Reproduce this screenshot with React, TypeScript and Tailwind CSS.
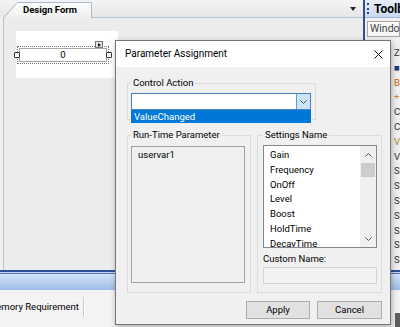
const settings = ["Gain", "Frequency", "OnOff", "Level", "Boost", "HoldTime", "DecayTime"];

const toolItems = [
  { t: "Zoom", c: "text-[#333]" },
  { t: "■ Panel", c: "text-[#1f3a7a]" },
  { t: "Button", c: "text-[#c76a1a]" },
  { t: "+ Add", c: "text-[#d08a2a]" },
  { t: "Combo", c: "text-[#333]" },
  { t: "Check", c: "text-[#333]" },
  { t: "Value", c: "text-[#a08a20]" },
  { t: "Volume", c: "text-[#333]" },
  { t: "Slider", c: "text-[#333]" },
  { t: "Switch", c: "text-[#333]" },
  { t: "Spin", c: "text-[#333]" },
  { t: "Static", c: "text-[#333]" },
  { t: "Shape", c: "text-[#333]" },
  { t: "Scope", c: "text-[#333]" },
  { t: "Script", c: "text-[#333]" },
];

function Chevron({ up }: { up?: boolean }) {
  return (
    <svg width="7" height="4" viewBox="0 0 7 4" className="block">
      <path
        d={up ? "M0.5 3.5L3.5 0.5L6.5 3.5" : "M0.5 0.5L3.5 3.5L6.5 0.5"}
        fill="none"
        stroke="#505050"
        strokeWidth="1"
      />
    </svg>
  );
}

export default function App() {
  return (
    <div className="relative h-[327px] w-[400px] overflow-hidden bg-[#f0f0f0] font-[Roboto,sans-serif] text-[9.5px] leading-[12px] text-black">
      <div className="flex h-full flex-col">
        <div className="flex h-[270px]">
          {/* designer */}
          <div className="flex w-[363px] flex-col">
            <div className="flex h-[17px] items-end bg-gradient-to-b from-[#f4f4f4] to-[#e7e7e7]">
              <div className="relative z-10 -mb-px ml-[3px] flex h-[17px] w-[89px] items-center pl-[20px]">
                <svg className="absolute inset-0" width="89" height="17" viewBox="0 0 89 17">
                  <defs>
                    <linearGradient id="tabg" x1="0" y1="0" x2="0" y2="1">
                      <stop offset="0" stopColor="#ffffff" />
                      <stop offset="1" stopColor="#eeeeee" />
                    </linearGradient>
                  </defs>
                  <path
                    d="M0.5 17 L13.5 2.5 Q14.5 1.5 16 1.5 L88.5 1.5 L88.5 17"
                    fill="url(#tabg)"
                    stroke="#a8b8cf"
                  />
                </svg>
                <span className="relative font-bold">Design Form</span>
              </div>
              <div className="flex-1" />
              <svg width="6" height="4" viewBox="0 0 6 4" className="mb-[6px] mr-[7px]">
                <path d="M0 0H6L3 4Z" fill="#222" />
              </svg>
            </div>
            <div className="ml-[3px] flex-1 border-l border-t border-[#b3c3da] bg-[#ececec] pl-[12px] pt-[13px]">
              <div className="h-[47px] w-[102px] bg-white pl-[1px] pt-[15px]">
                <div className="relative h-[18px] w-[92px] border border-dotted border-[#777] p-[1px]">
                  <div className="flex h-full items-center justify-center border border-[#a8a8a8] bg-white">0</div>
                  <div className="absolute left-[-4px] top-[5px] h-[6px] w-[6px] rounded-[1px] border border-[#333] bg-white" />
                  <div className="absolute right-[-4px] top-[5px] h-[6px] w-[6px] rounded-[1px] border border-[#333] bg-white" />
                  <div className="absolute left-[77px] top-[-6px] flex h-[7px] w-[8px] items-center justify-center border border-[#777] bg-[#e4e4e4]">
                    <svg width="3" height="4" viewBox="0 0 3 4">
                      <path d="M0 0L3 2L0 4Z" fill="#111" />
                    </svg>
                  </div>
                </div>
              </div>
            </div>
          </div>
          <div className="w-[2px] bg-[#2f4f96]" />
          {/* toolbox */}
          <div className="flex flex-1 flex-col overflow-hidden whitespace-nowrap">
            <div className="flex h-[18px] items-center border-b border-[#9fb4d6] bg-gradient-to-b from-[#e6eef9] to-[#c7d9f1] pl-[2px]">
              <div className="h-[11px] border-l-2 border-dotted border-[#3a4a6a]" />
              <span className="ml-[5px] text-[12px] font-bold">Toolbox</span>
            </div>
            <div className="ml-[2px] mt-[3px] flex h-[16px] items-center border border-[#a7a7a7] bg-[#f7f7f7] pl-[2px] text-[10.5px] text-[#444]">
              Window
            </div>
            <div className="pl-[29px] pt-[9px] leading-[14.8px]">
              {toolItems.map((it, i) => (
                <div key={i} className={it.c}>
                  {it.t}
                </div>
              ))}
            </div>
          </div>
        </div>
        {/* bottom */}
        <div className="h-[2px] bg-[#2c4d98]" />
        <div className="h-[1px] bg-[#c5d5ef]" />
        <div className="h-[1px] bg-[#4f72b5]" />
        <div className="h-[16px] bg-gradient-to-b from-[#d4e3f7] to-[#9cbce8]" />
        <div className="relative flex-1 bg-[#f3f3f3]">
          <div className="mt-[7px] flex h-[20px] items-center">
            <div className="w-[83px] overflow-hidden whitespace-nowrap">
              <span className="-ml-[12px] inline-block">Memory Requirement</span>
            </div>
            <div className="h-full w-[2px] border-l border-r border-l-[#c8c8c8] border-r-white" />
          </div>
          <div className="absolute bottom-0 right-0 h-[14px] w-[5px] bg-[#5f5f5f]" />
        </div>
      </div>

      {/* dialog */}
      <div className="absolute left-[115px] top-[40px] flex h-[285px] w-[276px] flex-col border border-[#767676] bg-[#f0f0f0] shadow-[1px_2px_6px_rgba(0,0,0,0.3)]">
        <div className="flex h-[26px] items-center bg-white pl-[9px] text-[10px]">
          <span>Parameter Assignment</span>
          <svg width="9" height="9" viewBox="0 0 9 9" className="ml-auto mr-[7px]">
            <path d="M0.5 0.5L8.5 8.5M8.5 0.5L0.5 8.5" stroke="#111" strokeWidth="1" />
          </svg>
        </div>
        <div className="flex flex-col pl-[11px] pr-[8px]">
          <fieldset className="mt-[10px] w-[189px] border border-[#dcdcdc] pb-[9px] pl-[3px] pr-[4px] pt-[4px]">
            <legend className="px-[2px] leading-[12px]">Control Action</legend>
            <div className="relative flex h-[17px] border border-[#4d82bd] bg-white">
              <div className="flex-1" />
              <div className="flex w-[14px] items-center justify-center border-l border-[#569de5] bg-[#cce4f7]">
                <Chevron />
              </div>
              <div className="absolute left-[-1px] right-[-1px] top-[16px] z-10 flex h-[13px] items-center bg-[#0078d7] pl-[3px] text-white">
                ValueChanged
              </div>
            </div>
          </fieldset>
          <div className="mt-[9px] flex gap-[6px]">
            <fieldset className="w-[124px] border border-[#dcdcdc] pb-[9px] pl-[3px] pr-[5px] pt-[5px]">
              <legend className="px-[2px] leading-[12px]">Run-Time Parameter</legend>
              <div className="h-[137px] border border-[#a0a0a0] bg-[#f0f0f0] pl-[6px] pt-[1px] leading-[14.8px]">
                uservar1
              </div>
            </fieldset>
            <fieldset className="w-[125px] border border-[#dcdcdc] pb-[8px] pl-[5px] pr-[4px] pt-[4px]">
              <legend className="px-[2px] leading-[12px]">Settings Name</legend>
              <div className="flex h-[103px] border border-[#828790] bg-white">
                <div className="flex-1 overflow-hidden pl-[6px] pt-[2px] leading-[14.8px]">
                  {settings.map((s) => (
                    <div key={s}>{s}</div>
                  ))}
                </div>
                <div className="flex w-[16px] flex-col items-center bg-[#f0f0f0]">
                  <div className="flex h-[17px] items-center justify-center">
                    <Chevron up />
                  </div>
                  <div className="h-[14px] w-[14px] bg-[#cdcdcd]" />
                  <div className="flex-1" />
                  <div className="flex h-[17px] items-center justify-center">
                    <Chevron />
                  </div>
                </div>
              </div>
              <div className="mt-[5px] leading-[12px]">Custom Name:</div>
              <div className="mt-[2px] h-[17px] border border-[#d4d4d4] bg-[#f2f2f2]" />
            </fieldset>
          </div>
          <div className="mt-[8px] flex justify-end gap-[7px]">
            <button className="h-[18px] w-[64px] border border-[#adadad] bg-[#e1e1e1]">Apply</button>
            <button className="h-[18px] w-[65px] border border-[#adadad] bg-[#e1e1e1]">Cancel</button>
          </div>
        </div>
      </div>
    </div>
  );
}
